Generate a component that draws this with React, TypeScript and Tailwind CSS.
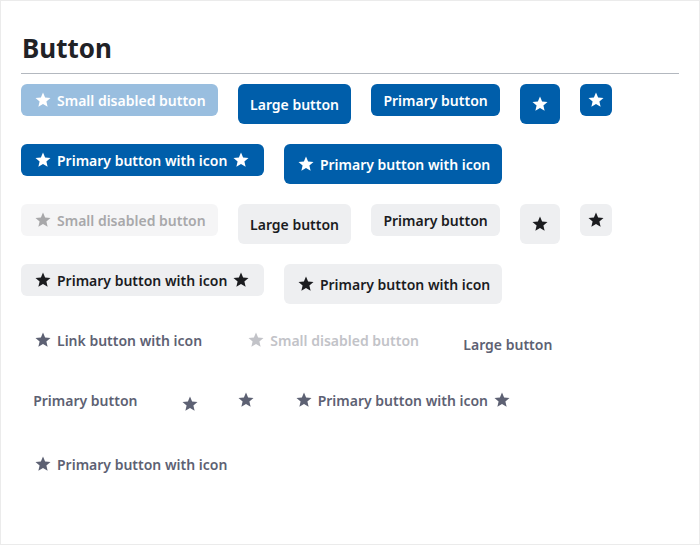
import React from "react";

const Star = ({ size = 18 }: { size?: number }) => (
  <svg width={size} height={size} viewBox="0 0 24 24" fill="currentColor" className="shrink-0">
    <path d="M12 17.27L18.18 21l-1.64-7.03L22 9.24l-7.19-.61L12 2 9.19 8.63 2 9.24l5.46 4.73L5.82 21z" />
  </svg>
);

type Variant = "primary" | "secondary" | "link";

const styles: Record<Variant, { normal: string; disabled: string }> = {
  primary: { normal: "bg-[#005eaa] text-white", disabled: "bg-[#99bedf] text-white" },
  secondary: { normal: "bg-[#eeeff1] text-[#1b1c1f]", disabled: "bg-[#f5f5f6] text-[#a8a8aa]" },
  link: { normal: "bg-transparent text-[#5d6173]", disabled: "bg-transparent text-[#c2c3c8]" },
};

function Btn({
  v,
  large,
  disabled,
  left,
  right,
  iconOnly,
  children,
}: {
  v: Variant;
  large?: boolean;
  disabled?: boolean;
  left?: boolean;
  right?: boolean;
  iconOnly?: boolean;
  children?: React.ReactNode;
}) {
  const s = disabled ? styles[v].disabled : styles[v].normal;
  const h = large ? "h-10" : "h-8";
  if (iconOnly) {
    return (
      <button className={`${s} ${large ? "w-10 h-10" : "w-8 h-8"} rounded-md flex items-center justify-center`}>
        <Star size={18} />
      </button>
    );
  }
  return (
    <button
      className={`${s} ${h} rounded-md flex items-center gap-[5px] text-[14px] font-semibold whitespace-nowrap ${left ? "pl-[13px]" : "pl-[12.2px]"} ${right ? "pr-[13.6px]" : "pr-[12.2px]"}`}
    >
      {left && <Star size={18} />}
      <span>{children}</span>
      {right && <Star size={18} />}
    </button>
  );
}

function Set({ v }: { v: Variant }) {
  return (
    <>
      <Btn v={v} disabled left>Small disabled button</Btn>
      <Btn v={v} large>Large button</Btn>
      <Btn v={v}>Primary button</Btn>
      <Btn v={v} large iconOnly />
      <Btn v={v} iconOnly />
      <Btn v={v} left right>Primary button with icon</Btn>
      <Btn v={v} large left>Primary button with icon</Btn>
    </>
  );
}

export default function App() {
  return (
    <div
      className="h-[545px] w-[700px] border border-[#ebebeb] bg-white px-5 box-border"
      style={{ fontFamily: '"Noto Sans", "Open Sans", sans-serif' }}
    >
      <h1 className="pt-[29px] text-[26px] leading-[36px] font-bold text-[#212226] pl-px">Button</h1>
      <div className="mt-[7px] h-px bg-[#b3b8bf]" />
      <div className="mt-2.5 flex flex-wrap items-start gap-5">
        <Set v="primary" />
        <Set v="secondary" />
        <Btn v="link" left>Link button with icon</Btn>
        <Set v="link" />
      </div>
    </div>
  );
}
